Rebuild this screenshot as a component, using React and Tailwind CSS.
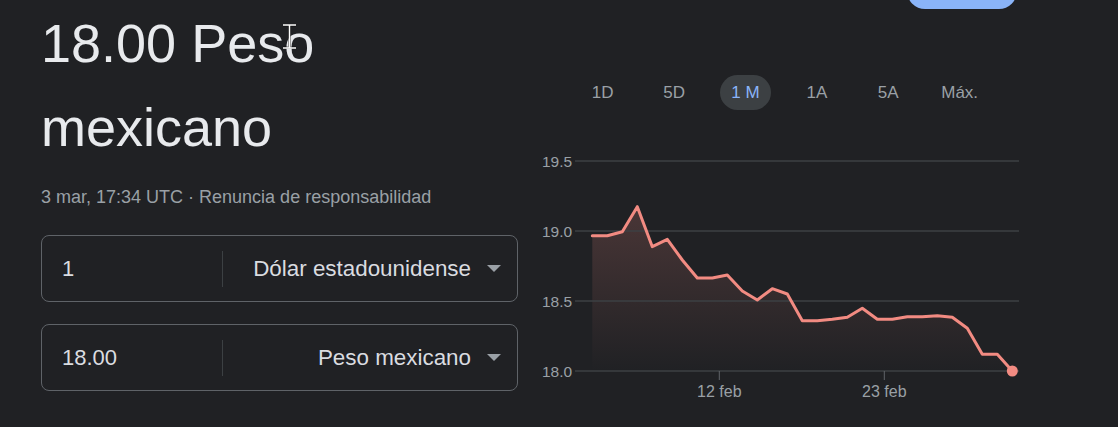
import React from "react";

const TABS = ["1D", "5D", "1 M", "1A", "5A", "Máx."];
const ACTIVE_TAB = "1 M";

// rate samples for the month, in chart pixels (y) — one every 15px
const SERIES = [
  95.7, 95.7, 91.7, 66.7, 106.7, 99.3, 120, 138, 138, 135, 151, 160, 148.7,
  154, 180.7, 180.7, 179.3, 177.3, 168.3, 179.3, 179.3, 176.7, 176.7, 175.7,
  177.3, 188.3, 214.3, 214.3, 231,
];

const Y_TICKS = [
  { label: "19.5", y: 21 },
  { label: "19.0", y: 91 },
  { label: "18.5", y: 161 },
  { label: "18.0", y: 231 },
];

const X_TICKS = [
  { label: "12 feb", x: 189.3 },
  { label: "23 feb", x: 354.3 },
];

const Caret = () => (
  <svg width="14" height="7" viewBox="0 0 14 7" className="shrink-0">
    <path d="M0 0h14L7 7z" fill="#9aa0a6" />
  </svg>
);

const CurrencyField = ({ value, currency }) => (
  <div className="flex h-[67px] items-center rounded-[8px] border border-[#5f6368]">
    <div className="w-[180px] pl-[20px] text-[22px] text-[#dadce0]">{value}</div>
    <div className="h-[36px] w-px bg-[#3c4043]" />
    <div className="flex flex-1 items-center justify-end pr-[16px]">
      <span className="text-[22.4px] text-[#dadce0]">{currency}</span>
      <span className="ml-[16px]">
        <Caret />
      </span>
    </div>
  </div>
);

const Chart = () => {
  const pts = SERIES.map((y, i) => [62.3 + 15 * i, y]);
  const line = pts.map(([x, y]) => `${x},${y}`).join(" ");
  const last = pts[pts.length - 1];
  const area = `${line} ${last[0]},231 ${pts[0][0]},231`;

  return (
    <svg width="490" height="270" viewBox="0 0 490 270" className="block">
      <defs>
        <linearGradient id="fade" x1="0" y1="66" x2="0" y2="231" gradientUnits="userSpaceOnUse">
          <stop offset="0" stopColor="#f28b82" stopOpacity="0.2" />
          <stop offset="1" stopColor="#f28b82" stopOpacity="0" />
        </linearGradient>
      </defs>

      <polygon points={area} fill="url(#fade)" />

      {Y_TICKS.map((t) => (
        <g key={t.label}>
          <line x1="45" x2="489" y1={t.y} y2={t.y} stroke="#3c4043" strokeWidth="1.5" />
          <text
            x="12"
            y={t.y + 5.6}
            fontSize="15.5"
            fill="#9aa0a6"
            fontFamily="'Liberation Sans', Arial, sans-serif"
          >
            {t.label}
          </text>
        </g>
      ))}

      {X_TICKS.map((t) => (
        <g key={t.label}>
          <line x1={t.x} x2={t.x} y1="231" y2="240" stroke="#5f6368" strokeWidth="1" />
          <text
            x={t.x}
            y="256.7"
            fontSize="16"
            textAnchor="middle"
            fill="#9aa0a6"
            fontFamily="'Liberation Sans', Arial, sans-serif"
          >
            {t.label}
          </text>
        </g>
      ))}

      <polyline
        points={line}
        fill="none"
        stroke="#f28b82"
        strokeWidth="3"
        strokeLinejoin="round"
        strokeLinecap="round"
      />
      <circle cx={last[0]} cy={last[1]} r="5.5" fill="#f28b82" />
    </svg>
  );
};

export default function App() {
  return (
    <div className="relative flex h-[427px] w-[1118px] overflow-hidden bg-[#202124] font-['Liberation_Sans',Arial,sans-serif]">
      {/* left: headline + converter */}
      <div className="w-[518px] shrink-0 pl-[41px]">
        <h1 className="mt-[1px] text-[54px] leading-[84px] font-normal text-[#e8eaed]">
          18.00 Peso mexicano
        </h1>
        <div className="mt-[16px] text-[18px] leading-[24px] text-[#9aa0a6]">
          3 mar, 17:34 UTC · <span className="text-[#9aa0a6]">Renuncia de responsabilidad</span>
        </div>
        <div className="mt-[26px] flex flex-col gap-[22px]">
          <CurrencyField value="1" currency="Dólar estadounidense" />
          <CurrencyField value="18.00" currency="Peso mexicano" />
        </div>
      </div>

      {/* right: range tabs + chart */}
      <div className="ml-[12px] w-[490px] shrink-0">
        <div className="flex justify-end pr-[3px]">
          <div className="-mt-[27px] h-[36px] w-[110px] rounded-full bg-[#8ab4f8]" />
        </div>
        <div className="ml-[37px] mt-[65px] flex">
          {TABS.map((tab) => (
            <div key={tab} className="flex h-[36px] w-[71.4px] items-center justify-center pt-px text-[17px]">
              {tab === ACTIVE_TAB ? (
                <span className="flex h-full items-center rounded-full bg-[#3c4043] px-[11px] text-[#8ab4f8]">
                  {tab}
                </span>
              ) : (
                <span className="text-[#9aa0a6]">{tab}</span>
              )}
            </div>
          ))}
        </div>
        <div className="mt-[30px]">
          <Chart />
        </div>
      </div>

      {/* text cursor over the headline */}
      <svg className="absolute left-[282px] top-[24px]" width="15" height="25" viewBox="0 0 15 25">
        <path d="M1 1h13M7.5 1v23M1 24h13" stroke="#000" strokeWidth="3" strokeOpacity="0.5" />
        <path d="M1 1h13M7.5 1v23M1 24h13" stroke="#fff" strokeWidth="1.5" />
      </svg>
    </div>
  );
}
